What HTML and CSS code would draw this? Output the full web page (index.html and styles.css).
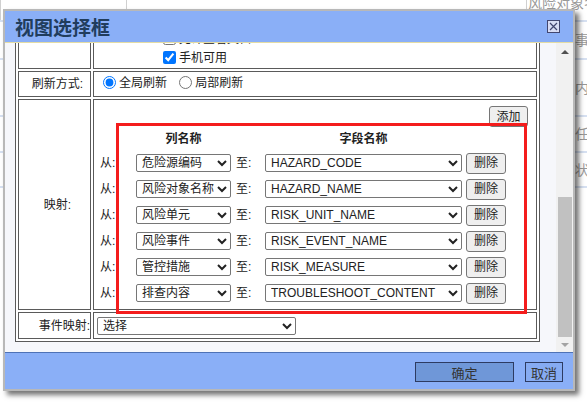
FILE: index.html
```html
<!DOCTYPE html>
<html lang="zh-CN">
<head>
<meta charset="UTF-8">
<title>视图选择框</title>
<link rel="stylesheet" href="styles.css">
</head>
<body>

<div class="page">

<!-- list page underneath the dialog -->
<div class="bg-list">
  <div class="bg-row bg-head"><span></span><span></span><span class="bg-wide">风险对象名称</span></div>
  <div class="bg-row bg-r2"><span></span><span></span><span></span><span>事件</span></div>
  <div class="bg-row bg-r3"><span></span><span></span><span></span><span>内容</span></div>
  <div class="bg-row bg-r4"><span></span><span></span><span></span><span>任务</span></div>
  <div class="bg-row bg-r5"><span></span><span></span><span></span><span>状态</span></div>
</div>

<div class="dialog">

  <div class="dialog-title">
    <h1>视图选择框</h1>
    <span class="close-btn">
      <svg width="13" height="13" viewBox="0 0 13 13"><rect x="0.5" y="0.5" width="12" height="12" fill="#d7dcf4" stroke="#414670"/><path d="M3 3L10 10M10 3L3 10" stroke="#414670" stroke-width="1.2"/></svg>
    </span>
  </div>

  <div class="dialog-body">
    <div class="scroller">
      <table class="form-table">
        <tr>
          <td class="lbl">视图名称:</td>
          <td><input type="text" class="text-input" value="风险对象视图"></td>
        </tr>
        <tr>
          <td class="lbl">数据源:</td>
          <td><select class="sel-wide"><option>RISK_OBJECT</option></select></td>
        </tr>
        <tr>
          <td class="lbl">显示选项:</td>
          <td class="checks">
            <label><input type="checkbox" checked>允许导出</label>
            <label><input type="checkbox">允许打印</label>
            <label><input type="checkbox">允许查看文档</label>
            <label><input type="checkbox" checked>手机可用</label>
          </td>
        </tr>
        <tr class="radio-row">
          <td class="lbl">刷新方式:</td>
          <td>
            <label><input type="radio" name="refresh" checked>全局刷新</label>
            <label><input type="radio" name="refresh">局部刷新</label>
          </td>
        </tr>
        <tr>
          <td class="lbl">映射:</td>
          <td class="map-cell">
            <div class="map-wrap">
              <div class="map-top"><button type="button" class="sys-btn add">添加</button></div>
              <div class="map-grid">
                <span></span><b class="map-head">列名称</b><span></span><b class="map-head">字段名称</b><span></span>

                <span class="from">从:</span>
                <select class="sel-col"><option>危险源编码</option></select>
                <span class="to">至:</span>
                <select class="sel-field"><option>HAZARD_CODE</option></select>
                <button type="button" class="sys-btn del">删除</button>

                <span class="from">从:</span>
                <select class="sel-col"><option>风险对象名称</option></select>
                <span class="to">至:</span>
                <select class="sel-field"><option>HAZARD_NAME</option></select>
                <button type="button" class="sys-btn del">删除</button>

                <span class="from">从:</span>
                <select class="sel-col"><option>风险单元</option></select>
                <span class="to">至:</span>
                <select class="sel-field"><option>RISK_UNIT_NAME</option></select>
                <button type="button" class="sys-btn del">删除</button>

                <span class="from">从:</span>
                <select class="sel-col"><option>风险事件</option></select>
                <span class="to">至:</span>
                <select class="sel-field"><option>RISK_EVENT_NAME</option></select>
                <button type="button" class="sys-btn del">删除</button>

                <span class="from">从:</span>
                <select class="sel-col"><option>管控措施</option></select>
                <span class="to">至:</span>
                <select class="sel-field"><option>RISK_MEASURE</option></select>
                <button type="button" class="sys-btn del">删除</button>

                <span class="from">从:</span>
                <select class="sel-col"><option>排查内容</option></select>
                <span class="to">至:</span>
                <select class="sel-field"><option>TROUBLESHOOT_CONTENT</option></select>
                <button type="button" class="sys-btn del">删除</button>
              </div>
              <div class="mark"></div>
            </div>
          </td>
        </tr>
        <tr class="event-row">
          <td class="lbl lbl-event">事件映射:</td>
          <td><select class="sel-event"><option>选择</option></select></td>
        </tr>
      </table>
    </div>

    <div class="vscroll">
      <div class="vscroll-up"><i></i></div>
      <div class="vscroll-track"><div class="vscroll-thumb"></div></div>
      <div class="vscroll-down"><i></i></div>
    </div>
  </div>

  <div class="dialog-foot">
    <button type="button" class="btn btn-ok">确定</button>
    <button type="button" class="btn btn-cancel">取消</button>
  </div>

</div><!-- dialog -->

</div><!-- page -->

</body>
</html>
```

FILE: styles.css
```css
* {
box-sizing: border-box;
}
body {
margin: 0;
background: #fff;
font-family: "Liberation Sans", "Noto Sans CJK SC", sans-serif;
font-size: 12px;
line-height: 16px;
color: #222;
overflow: hidden;
}
.page {
position: relative;
width: 587px;
height: 403px;
overflow: hidden;
}

/* list page behind */
.bg-list {
margin-top: -5px;
color: #999;
font-size: 14px;
}
.bg-row {
display: grid;
grid-template-columns: 126px 400px 46px 1fr;
border-bottom: 2px solid #d6e0f1;
}
.bg-row span {
display: flex;
align-items: center;
padding-left: 3px;
white-space: nowrap;
overflow: hidden;
}
.bg-head {
height: 27px;
}
.bg-head span {
align-items: flex-start;
border-left: 1px solid #d0d0d0;
}
.bg-head .bg-wide {
grid-column: 3 / 5;
padding-left: 1px;
}
.bg-r2 { height: 38px; }
.bg-r3 { height: 57px; }
.bg-r4 { height: 36px; }
.bg-r5 { height: 35px; }

/* dialog window */
.dialog {
position: absolute;
left: 3px;
top: 9px;
width: 572px;
height: 382px;
border: 2px solid #b8b8b8;
background: #f6f7fb;
box-shadow: 4px 4px 5px rgba(0, 0, 0, 0.55);
display: flex;
flex-direction: column;
}
.dialog-title {
height: 32px;
flex-shrink: 0;
background: #8aaff7;
border-bottom: 1px solid #e4dca4;
display: flex;
align-items: center;
justify-content: space-between;
padding: 0 13px 0 10px;
}
.dialog-title h1 {
margin: 0;
font-family: "Noto Sans CJK SC", sans-serif;
font-size: 19px;
line-height: 24px;
font-weight: bold;
color: #213d5d;
}
.close-btn {
display: flex;
}
.dialog-body {
flex: 1;
min-height: 0;
display: flex;
}
.scroller {
flex: 1;
display: flex;
flex-direction: column;
justify-content: flex-end;
overflow: hidden;
padding: 0 0 10px 10px;
}

/* fake scrollbar */
.vscroll {
width: 17px;
display: flex;
flex-direction: column;
background: #f1f1f1;
}
.vscroll-up, .vscroll-down {
display: flex;
justify-content: center;
align-items: center;
}
.vscroll-up {
height: 17px;
}
.vscroll-down {
height: 15px;
}
.vscroll-up i {
border-left: 4px solid transparent;
border-right: 4px solid transparent;
border-bottom: 4px solid #505050;
}
.vscroll-down i {
border-left: 4px solid transparent;
border-right: 4px solid transparent;
border-top: 4px solid #a3a3a3;
}
.vscroll-track {
flex: 1;
display: flex;
flex-direction: column;
justify-content: flex-end;
padding: 0 1px 0 2px;
}
.vscroll-thumb {
height: 140px;
background: #c1c1c1;
}

/* form table */
.form-table {
flex-shrink: 0;
width: 525px;
border: 1px solid #5a5a5a;
border-spacing: 2px;
background: #fff;
}
.form-table td {
border: 1px solid #5a5a5a;
padding: 0 3px;
}
.form-table .lbl {
width: 73px;
text-align: center;
padding: 0 0 0 6px;
}
.form-table .lbl-event {
text-align: right;
padding: 0;
}
.text-input {
width: 200px;
height: 20px;
margin: 3px 0;
font: inherit;
}
select {
font: inherit;
color: #222;
height: 18px;
padding: 0 0 0 1px;
border: 1px solid #767676;
border-radius: 2px;
background: #fff;
}
.sel-wide {
width: 200px;
margin: 4px 0;
}
.checks {
padding: 0 3px 1px 65px !important;
}
.checks label {
display: flex;
align-items: center;
height: 19px;
}
.checks input {
margin: 0 3px 0 4px;
}
.radio-row td {
height: 26px;
}
.radio-row label {
display: inline-flex;
align-items: center;
margin-right: 3px;
}
.radio-row input {
margin: 0 3px 0 6px;
}

/* mapping cell */
.form-table .map-cell {
padding: 0;
}
.map-wrap {
position: relative;
padding: 6px 8px 3px 6px;
}
.map-top {
display: flex;
justify-content: flex-end;
}
.sys-btn {
height: 20px;
padding: 0 5px;
font: inherit;
color: #222;
background: #efefef;
border: 1px solid #767676;
border-radius: 3px;
}
.add {
width: 39px;
height: 21px;
padding: 0;
}
.map-grid {
display: grid;
grid-template-columns: 36px 95px 34px 197px 44px;
grid-template-rows: 23px;
grid-auto-rows: 26px;
align-items: center;
}
.map-head {
text-align: center;
font-weight: bold;
}
.to {
padding-left: 5px;
}
.sel-col {
width: 95px;
}
.sel-field {
width: 197px;
}
.del {
margin-left: 4px;
width: 40px;
height: 21px;
}
/* red highlight frame over the mapping list */
.mark {
position: absolute;
left: 22px;
top: 23px;
width: 411px;
height: 191px;
border: 3px solid #f41c1c;
pointer-events: none;
}

.event-row td {
height: 27px;
}
.sel-event {
width: 199px;
}

/* footer */
.dialog-foot {
height: 37px;
flex-shrink: 0;
background: #8aaff7;
border-top: 1px solid #4e72b6;
display: flex;
justify-content: flex-end;
align-items: center;
gap: 11px;
padding: 1px 10px 0 0;
}
.btn {
height: 20px;
padding: 0;
font-family: "Noto Sans CJK SC", sans-serif;
font-size: 13px;
color: #333;
background: #86abf2;
border: 1px solid #2d3b62;
}
.btn-ok {
width: 99px;
background: #6f97d8;
}
.btn-cancel {
width: 38px;
}
```
